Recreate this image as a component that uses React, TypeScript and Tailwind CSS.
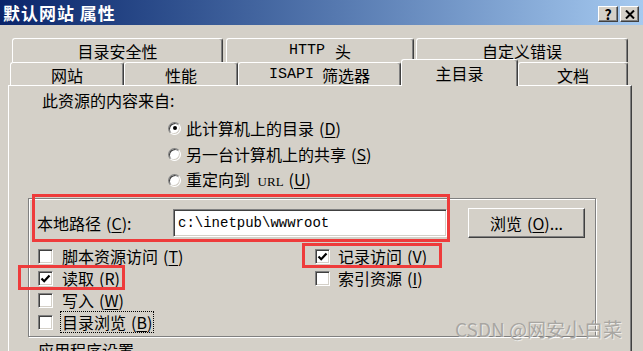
import type { ReactNode } from 'react';

const raised =
  'border border-t-white border-l-white border-r-[#404040] border-b-[#404040] shadow-[inset_-1px_-1px_0_#808080]';
const sunken =
  'border border-t-[#808080] border-l-[#808080] border-r-white border-b-white shadow-[inset_1px_1px_0_#404040,inset_-1px_-1px_0_#d4d0c8]';

function Key({ k }: { k: string }) {
  return (
    <span className="ml-[5px]">
      (<span className="underline underline-offset-2">{k}</span>)
    </span>
  );
}

function Tab({ className, children }: { className: string; children: ReactNode }) {
  return (
    <div
      className={`flex items-center justify-center rounded-t-[3px] border-l border-t border-r border-l-white border-t-white border-r-[#404040] bg-[#d4d0c8] shadow-[inset_-1px_0_0_#808080] ${className}`}
    >
      {children}
    </div>
  );
}

function Radio({ checked, children }: { checked?: boolean; children: ReactNode }) {
  return (
    <div className="flex h-[26px] items-center gap-[5px]">
      <div className={`flex h-[13px] w-[13px] items-center justify-center rounded-full bg-white ${sunken}`}>
        {checked && <div className="h-[4px] w-[4px] rounded-full bg-black" />}
      </div>
      <span>{children}</span>
    </div>
  );
}

function Check({ checked, gap, children }: { checked?: boolean; gap: string; children: ReactNode }) {
  return (
    <div className={`flex h-[22px] items-center ${gap}`}>
      <div className={`flex h-[15px] w-[15px] shrink-0 items-center justify-center bg-white ${sunken}`}>
        {checked && (
          <svg width="11" height="11" viewBox="0 0 11 11">
            <path d="M1.5 5.5 L4.2 8.2 L9.5 2.5" fill="none" stroke="#000" strokeWidth="2.2" />
          </svg>
        )}
      </div>
      {children}
    </div>
  );
}

export default function App() {
  return (
    <div className="relative flex h-[351px] w-[643px] flex-col overflow-hidden bg-[#d4d0c8] font-['Noto_Sans_CJK_SC','Liberation_Sans',sans-serif] text-[16px] leading-[20px] text-black">
      {/* Title bar */}
      <div className="flex h-[25px] shrink-0 items-center justify-between bg-gradient-to-r from-[#0a246a] to-[#a6caf0] pl-[3px] pr-[4px]">
        <span className="text-[17px] font-bold tracking-[1px] text-white">默认网站 属性</span>
        <div className="mt-[3px] flex gap-[2px]">
          <div className={`flex h-[16px] w-[20px] items-center justify-center bg-[#d4d0c8] text-[14px] font-bold leading-none ${raised}`}>
            ?
          </div>
          <div className={`flex h-[16px] w-[19px] items-center justify-center bg-[#d4d0c8] ${raised}`}>
            <svg width="10" height="9" viewBox="0 0 10 9">
              <path d="M1 0.5 L9 8.5 M9 0.5 L1 8.5" stroke="#000" strokeWidth="2" />
            </svg>
          </div>
        </div>
      </div>

      {/* Body */}
      <div className="flex flex-1 flex-col pl-[8px] pt-[13px]">
        {/* Tab row 1 */}
        <div className="flex h-[24px]">
          <Tab className="ml-[4px] w-[211px]">目录安全性</Tab>
          <Tab className="ml-[3px] w-[188px]">
            <span className="font-['Liberation_Mono',monospace] text-[15px]">HTTP</span>
            <span className="ml-[10px]">头</span>
          </Tab>
          <Tab className="ml-[2px] w-[212px]">自定义错误</Tab>
        </div>
        {/* Tab row 2 */}
        <div className="flex h-[23px] items-end">
          <Tab className="ml-[2px] h-[23px] w-[114px] pt-[2px]">网站</Tab>
          <Tab className="h-[23px] w-[114px] pt-[2px]">性能</Tab>
          <Tab className="h-[23px] w-[163px] pt-[2px]">
            <span className="font-['Liberation_Mono',monospace] text-[15px]">ISAPI</span>
            <span className="ml-[8px]">筛选器</span>
          </Tab>
          <Tab className="relative z-10 -mb-px h-[27px] w-[117px]">主目录</Tab>
          <Tab className="h-[23px] w-[110px] pt-[2px]">文档</Tab>
        </div>

        {/* Panel */}
        <div className="flex w-[624px] flex-1 flex-col border-l border-t border-r border-l-white border-t-white border-r-[#404040] shadow-[inset_-1px_0_0_#808080]">
          <div className="mt-[4px] h-[20px] pl-[33px]">此资源的内容来自:</div>
          <div className="mt-[5px] flex flex-col pl-[159px]">
            <Radio checked>
              此计算机上的目录
              <Key k="D" />
            </Radio>
            <Radio>
              另一台计算机上的共享
              <Key k="S" />
            </Radio>
            <Radio>
              重定向到 <span className="ml-[4px] font-['Liberation_Serif',serif] text-[13px]">URL</span>
              <Key k="U" />
            </Radio>
          </div>

          {/* Group box */}
          <div className="ml-[19px] mt-[5px] flex h-[139px] w-[568px] shrink-0 flex-col border border-[#808080] shadow-[inset_1px_1px_0_#fff,1px_1px_0_#fff]">
            <div className="mt-[10px] flex h-[28px] items-center pl-[8px]">
              <span className="w-[136px]">
                本地路径
                <Key k="C" />:
              </span>
              <div className={`flex h-[28px] w-[274px] items-center bg-white pl-[4px] font-['Liberation_Mono',monospace] text-[14px] ${sunken}`}>
                c:\inetpub\wwwroot
              </div>
              <div className={`ml-[21px] flex h-[30px] w-[117px] items-center justify-center bg-[#d4d0c8] ${raised}`}>
                浏览
                <Key k="O" />
                ...
              </div>
            </div>

            <div className="mt-[8px] flex pl-[9px]">
              <div className="flex w-[277px] flex-col">
                <Check gap="gap-[9px]">
                  <span>
                    脚本资源访问
                    <Key k="T" />
                  </span>
                </Check>
                <Check checked gap="gap-[9px]">
                  <span>
                    读取
                    <Key k="R" />
                  </span>
                </Check>
                <Check gap="gap-[9px]">
                  <span>
                    写入
                    <Key k="W" />
                  </span>
                </Check>
                <Check gap="gap-[7px]">
                  <span className="flex h-[22px] items-center border border-dotted border-black px-[1px]">
                    目录浏览
                    <Key k="B" />
                  </span>
                </Check>
              </div>
              <div className="flex flex-col">
                <Check checked gap="gap-[8px]">
                  <span>
                    记录访问
                    <Key k="V" />
                  </span>
                </Check>
                <Check gap="gap-[8px]">
                  <span>
                    索引资源
                    <Key k="I" />
                  </span>
                </Check>
              </div>
            </div>
          </div>

          <div className="mt-[3px] pl-[29px]">应用程序设置</div>
        </div>
      </div>

      {/* Red annotation boxes */}
      <div className="absolute left-[32px] top-[194px] h-[48px] w-[418px] border-[3px] border-[#ee3b3b]" />
      <div className="absolute left-[302px] top-[243px] h-[25px] w-[140px] border-[3px] border-[#ee3b3b]" />
      <div className="absolute left-[18px] top-[265px] h-[25px] w-[107px] border-[3px] border-[#ee3b3b]" />

      {/* Watermark */}
      <div className="absolute left-[455px] top-[317px] text-[19px] leading-[24px] text-[#a8a6a2] [text-shadow:1px_1px_0_rgba(255,255,255,0.6)]">
        CSDN @网安小白菜
      </div>
    </div>
  );
}
